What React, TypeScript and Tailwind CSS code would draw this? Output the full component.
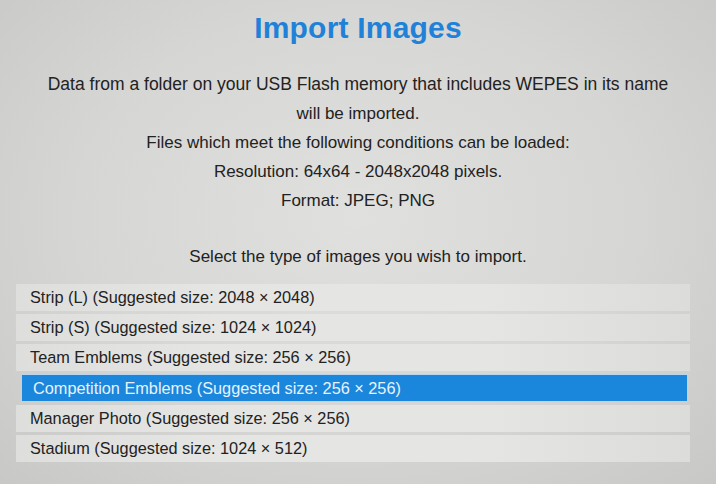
import React from "react";

const rows = [
  "Strip (L) (Suggested size: 2048 × 2048)",
  "Strip (S) (Suggested size: 1024 × 1024)",
  "Team Emblems (Suggested size: 256 × 256)",
  "Competition Emblems (Suggested size: 256 × 256)",
  "Manager Photo (Suggested size: 256 × 256)",
  "Stadium (Suggested size: 1024 × 512)",
];

export default function App() {
  return (
    <div className="w-[716px] h-[484px] overflow-hidden flex flex-col items-center bg-[radial-gradient(ellipse_at_50%_45%,#e0e0de_0%,#d6d6d4_55%,#c8c8c6_100%)] font-['Liberation_Sans',Arial,sans-serif] text-[#222222]">
      <h1 className="mt-[9px] text-[30px] leading-[38px] font-bold text-[#1f82d8] tracking-[0.2px]">
        Import Images
      </h1>
      <div className="mt-[23px] text-center text-[17px] leading-[29px]">
        <p className="text-[17.5px]">Data from a folder on your USB Flash memory that includes WEPES in its name</p>
        <p>will be imported.</p>
        <p>Files which meet the following conditions can be loaded:</p>
        <p>Resolution: 64x64 - 2048x2048 pixels.</p>
        <p>Format: JPEG; PNG</p>
      </div>
      <p className="mt-[27px] text-[17px] leading-[29px] text-center">
        Select the type of images you wish to import.
      </p>
      <div className="mt-[13px] w-full pl-[16px] pr-[26px] flex flex-col gap-[3px]">
        {rows.map((r, i) =>
          i === 3 ? (
            <div
              key={r}
              className="h-[28px] ml-[6px] mr-[3px] flex items-center pl-[11px] text-[16.3px] bg-[#1a86dc] text-[#e9f2fb] border-t border-b border-[#b9d6ee]"
            >
              {r}
            </div>
          ) : (
            <div
              key={r}
              className="h-[27px] flex items-center pl-[14px] text-[16.3px] bg-[linear-gradient(to_right,#dededc,#e5e5e3_30%,#e5e5e3_70%,#dcdcda)]"
            >
              {r}
            </div>
          )
        )}
      </div>
    </div>
  );
}
